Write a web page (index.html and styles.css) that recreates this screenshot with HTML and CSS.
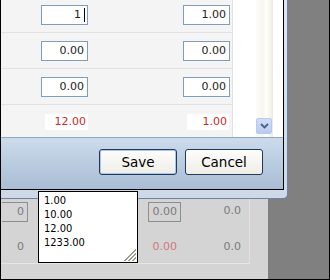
FILE: index.html
```html
<!DOCTYPE html>
<html>
<head>
<meta charset="utf-8">
<link rel="stylesheet" href="styles.css">
</head>
<body>
<div class="screen">
  <div class="page">
    <div class="page-main">
      <div class="page-rows">
        <div class="prow top">
          <div class="pc c1"><span class="pbox cut">0</span></div>
          <div class="pc c2"><span class="pbox">0.00</span></div>
          <div class="pc c3">0.0</div>
        </div>
        <div class="prow">
          <div class="pc c1"><span class="ptext cut">0</span></div>
          <div class="pc c2"><span class="ptext red">0.00</span></div>
          <div class="pc c3">0.0</div>
        </div>
      </div>
    </div>
    <div class="page-side"></div>
  </div>

  <div class="dialog">
    <div class="dialog-body">
      <div class="grid">
        <div class="rows">
          <div class="row first">
            <div class="field"><span class="val">1</span><span class="caret"></span></div>
            <div class="field">1.00</div>
          </div>
          <div class="row">
            <div class="field">0.00</div>
            <div class="field">0.00</div>
          </div>
          <div class="row">
            <div class="field">0.00</div>
            <div class="field">0.00</div>
          </div>
          <div class="row total">
            <div class="sum left">12.00</div>
            <div class="sum right">1.00</div>
          </div>
        </div>
        <div class="blank"></div>
        <div class="scrollbar">
          <div class="arrow">
            <svg width="9" height="6" viewBox="0 0 9 6"><path d="M1 1 L4.5 4.5 L8 1" fill="none" stroke="#4d6185" stroke-width="1.8"/></svg>
          </div>
        </div>
        <div class="blank-end"></div>
      </div>
      <div class="buttons">
        <div class="btn focus">Save</div>
        <div class="btn">Cancel</div>
      </div>
    </div>
  </div>

  <div class="popup">
    <div class="item">1.00</div>
    <div class="item">10.00</div>
    <div class="item">12.00</div>
    <div class="item">1233.00</div>
    <div class="grip"></div>
  </div>
</div>
</body>
</html>
```

FILE: styles.css
```css
html, body {
  margin: 0;
  padding: 0;
}
body {
  font-family: "DejaVu Sans", Verdana, sans-serif;
  font-size: 11px;
}
.screen {
  width: 330px;
  height: 280px;
  box-sizing: border-box;
  border: 1px solid #000;
  border-top: none;
  position: relative;
  overflow: hidden;
}
.page {
  display: flex;
  height: 100%;
}
.page-main {
  width: 267px;
  background: #d4d4d4;
  padding-top: 199px;
  box-sizing: border-box;
}
.page-side {
  flex: 1;
  background: #808080;
}
.page-rows {
  width: 248px;
  border-right: 1px solid #e2e2e2;
  border-bottom: 1px solid #e6e6e6;
}
.prow {
  display: flex;
  height: 32px;
  align-items: center;
  color: #7a7a7a;
}
.prow.top {
  align-items: flex-start;
  padding-top: 3px;
  box-sizing: border-box;
}
.pc {
  text-align: right;
  line-height: 18px;
}
.c1 {
  width: 30px;
  display: flex;
  justify-content: flex-end;
  padding-right: 3px;
  box-sizing: border-box;
}
.c2 {
  margin-left: 117px;
  width: 33px;
  display: flex;
}
.c3 {
  width: 60px;
}
.pbox {
  display: block;
  width: 33px;
  height: 20px;
  box-sizing: border-box;
  border: 1px solid #8e8e8e;
  padding-right: 3px;
  text-align: right;
}
.pbox.cut {
  width: 26px;
  border-left: none;
}
.ptext {
  display: block;
  width: 33px;
  padding-right: 4px;
  box-sizing: border-box;
  text-align: right;
}
.ptext.cut {
  width: 26px;
}
.ptext.red {
  color: #cf7a7a;
}

/* dialog */
.dialog {
  position: absolute;
  left: 0;
  top: 0;
  width: 287px;
  height: 199px;
  box-sizing: border-box;
  padding: 0 3px 7px 0;
  background: linear-gradient(#dfe7f1, #cdd9e7);
  border-right: 1px solid #6f83a2;
  border-bottom: 1px solid #6f83a2;
  border-bottom-right-radius: 5px;
}
.dialog-body {
  width: 283px;
  height: 190px;
  box-sizing: border-box;
  border-right: 1px solid #000;
  border-bottom: 1px solid #000;
  display: flex;
  flex-direction: column;
}
.grid {
  height: 138px;
  box-sizing: border-box;
  border-bottom: 1px solid #93a6c0;
  display: flex;
  background: #fff;
  overflow: hidden;
}
.rows {
  width: 232px;
  box-sizing: border-box;
  border-right: 1px solid #e2e2e2;
  background: #f4f4f4;
}
.row {
  height: 36px;
  box-sizing: border-box;
  border-bottom: 1px solid #e2e2e2;
  display: flex;
  align-items: flex-start;
  padding: 8px 0 0 40px;
  gap: 95px;
}
.row.first {
  margin-top: -3px;
}
.field {
  width: 47px;
  height: 20px;
  box-sizing: border-box;
  border: 1px solid #7f9db9;
  background: #fff;
  color: #222;
  text-align: right;
  padding-right: 3px;
  line-height: 18px;
  display: flex;
  justify-content: flex-end;
  align-items: center;
}
.caret {
  display: inline-block;
  width: 1px;
  height: 14px;
  background: #000;
  margin-left: 3px;
  margin-right: -1px;
}
.row.total {
  border-bottom: none;
  padding: 9px 0 0 44px;
  gap: 99px;
}
.sum {
  height: 16px;
  line-height: 16px;
  background: #fff;
  color: #cc2a2a;
  text-align: right;
  padding-right: 2px;
  box-sizing: border-box;
}
.sum.left {
  width: 43px;
}
.sum.right {
  width: 42px;
}
.blank {
  width: 23px;
  background: #fff;
}
.scrollbar {
  width: 17px;
  background: linear-gradient(90deg, #fcfcfa 0%, #f7f6f0 40%, #ffffff 60%, #efebdd 100%);
  display: flex;
  flex-direction: column;
  justify-content: flex-end;
  padding-bottom: 3px;
  box-sizing: border-box;
}
.arrow {
  width: 16px;
  height: 16px;
  box-sizing: border-box;
  border: 1px solid #b8c9ec;
  border-radius: 2px;
  background: linear-gradient(#d3defa, #b8cbf3);
  display: flex;
  align-items: center;
  justify-content: center;
}
.blank-end {
  flex: 1;
  background: #fff;
}
.buttons {
  flex: 1;
  background: linear-gradient(#ccdbec, #a9bdd4);
  display: flex;
  justify-content: flex-end;
  align-items: flex-start;
  padding: 11px 20px 0 0;
  gap: 8px;
}
.btn {
  width: 78px;
  height: 26px;
  box-sizing: border-box;
  border: 1px solid #23395a;
  border-radius: 3px;
  background: linear-gradient(#fdfdfc, #efede6);
  font-size: 13.5px;
  line-height: 24px;
  text-align: center;
  color: #000;
}
.btn.focus {
  box-shadow: inset 0 0 0 1px #a8c7f0;
}

/* autocomplete popup */
.popup {
  position: absolute;
  left: 37px;
  top: 191px;
  width: 100px;
  height: 72px;
  box-sizing: border-box;
  border: 1px solid #000;
  background: #fff;
  padding: 2px 0 0 5px;
  font-family: "DejaVu Sans Condensed", "DejaVu Sans", sans-serif;
  font-stretch: condensed;
  font-size: 11px;
  line-height: 14px;
  color: #000;
}
.grip {
  position: absolute;
  right: 1px;
  bottom: 1px;
  width: 13px;
  height: 13px;
  background: repeating-linear-gradient(135deg, #ffffff 0 1.4px, #9c9c8c 1.4px 2.8px);
  clip-path: polygon(100% 0, 100% 100%, 0 100%);
}
```
